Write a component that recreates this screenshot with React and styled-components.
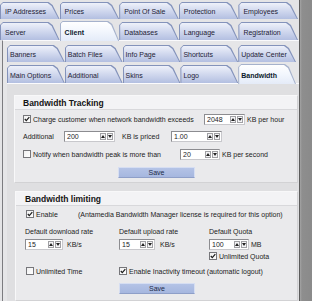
import React from 'react';
import styled, { createGlobalStyle } from 'styled-components';

const Global = createGlobalStyle`
  html, body { margin: 0; padding: 0; background: #e2e2e4; }
  body { font-family: "Liberation Sans", Arial, sans-serif; font-size: 7px; color: #1c1c1c; }
  * { box-sizing: border-box; }
`;

const Window = styled.div`
  width: 312px;
  height: 301px;
  display: flex;
  overflow: hidden;
  background: #e4e4e6;
`;

const Main = styled.div`
  width: 299px;
  display: flex;
  flex-direction: column;
  padding-top: 2px;
  background: #e4e4e6;
`;

const Edge = styled.div`
  flex: 1;
  background: linear-gradient(90deg, #5c5c5c 0, #5c5c5c 1px, #a4a4a4 1px, #8e8e8e 3px, #8a8a8a 100%);
`;

const TabRow = styled.div`
  display: grid;
  grid-template-columns: repeat(5, 1fr);
  width: ${p => p.$w}px;
  margin-left: ${p => p.$x}px;
  margin-top: ${p => p.$gap}px;
  position: relative;
  z-index: 2;
`;

const Tab = styled.div`
  position: relative;
  height: ${p => p.$h + (p.$active ? 2 : 0)}px;
  margin-top: ${p => (p.$active ? -1 : 0)}px;
  margin-bottom: ${p => (p.$active ? -1 : 0)}px;
  display: flex;
  align-items: center;
  padding: 2px 0 0 ${p => p.$pl}px;
  font-weight: ${p => (p.$active ? 700 : 400)};
  color: ${p => (p.$active ? '#0c1a2c' : '#1e2236')};
  background: ${p => (p.$active ? '#a6b2cc' : '#8493bb')};
  clip-path: polygon(0 3px, 3px 0, calc(100% - 11px) 0, calc(100% - 7px) 3px, 100% 100%, 0 100%);
  &::before {
    content: '';
    position: absolute;
    inset: 1px 1px 0 1px;
    clip-path: polygon(0 2px, 2px 0, calc(100% - 11px) 0, calc(100% - 7px) 3px, 100% 100%, 0 100%);
    background: ${p =>
      p.$active
        ? 'linear-gradient(#ffffff, #f2f6fd 50%, #e4ebf8)'
        : 'linear-gradient(#eef1fa 0%, #d3daef 45%, #b3bfe1 100%)'};
  }
  & > span { position: relative; white-space: nowrap; }
`;

const Page = styled.div`
  flex: 1;
  margin-left: 2px;
  border-left: 1px solid #7c7c80;
  border-top: 1px solid #fafafc;
  background: #e6e6e8;
  padding: 4px 0 0 4px;
  display: flex;
  flex-direction: column;
  position: relative;
  z-index: 1;
`;

const InnerPage = styled.div`
  flex: 1;
  border-top: 1px solid #fbfbfd;
  background: #dfdfe1;
  padding-top: 11px;
  display: flex;
  flex-direction: column;
  gap: 8px;
`;

const Group = styled.section`
  margin-left: ${p => p.$ml}px;
  width: ${p => p.$w}px;
  background: #eaeaec;
  border: 1px solid #f8f8f9;
  border-right-color: #d2d2d4;
  border-bottom-color: #d2d2d4;
  display: flex;
  flex-direction: column;
`;

const GroupHeader = styled.div`
  height: ${p => p.$h}px;
  display: flex;
  align-items: center;
  padding-left: ${p => p.$pl}px;
  background: #f3f3f5;
  border-bottom: 1px solid #d8d8db;
  font-weight: 700;
  font-size: 8.5px;
  color: #141414;
`;

const GroupBody = styled.div`
  padding: ${p => p.$pad};
  display: flex;
  flex-direction: column;
`;

const Row = styled.div`
  display: flex;
  align-items: center;
  height: ${p => p.$h || 12}px;
  margin-top: ${p => p.$mt || 0}px;
  margin-left: ${p => p.$ml || 0}px;
`;

const Cols = styled.div`
  display: grid;
  grid-template-columns: 94px 90px 1fr;
  align-items: center;
  height: ${p => p.$h}px;
  margin-top: ${p => p.$mt || 0}px;
`;

const Cell = styled.div`
  display: flex;
  align-items: center;
  grid-column: ${p => p.$col || 'auto'};
  padding-left: ${p => p.$pl || 0}px;
`;

const Text = styled.span`
  display: inline-block;
  white-space: nowrap;
  width: ${p => (p.$w ? `${p.$w}px` : 'auto')};
  margin-left: ${p => p.$ml || 0}px;
`;

const Box = styled.span`
  width: 8px;
  height: 8px;
  flex: none;
  border: 1px solid #76767a;
  background: linear-gradient(135deg, #f0f0f0, #ffffff);
  display: inline-flex;
  align-items: center;
  justify-content: center;
  margin-right: 2px;
`;

const Field = styled.div`
  width: ${p => p.$w}px;
  height: 11px;
  flex: none;
  border: 1px solid #8c8c90;
  border-right-color: #c8c8cc;
  border-bottom-color: #c8c8cc;
  background: #fff;
  display: flex;
  align-items: center;
  padding-left: 2px;
  margin-left: ${p => p.$ml || 0}px;
`;

const FieldText = styled.span`
  flex: 1;
`;

const Spin = styled.div`
  display: flex;
  height: 100%;
  gap: 1px;
  padding: 1px 1px 1px 0;
`;

const SpinBtn = styled.div`
  width: 6px;
  background: #f4f4f6;
  border: 1px solid #a0a0a4;
  display: flex;
  align-items: ${p => (p.$down ? 'flex-end' : 'flex-start')};
  justify-content: center;
  padding: 1px 0;
`;

const SaveButton = styled.div`
  width: ${p => p.$w}px;
  height: 11px;
  margin-left: ${p => p.$ml}px;
  margin-top: ${p => p.$mt}px;
  background: linear-gradient(#b4c3e6, #a6b7df);
  border: 1px solid #d6def2;
  border-bottom-color: #8e9fc8;
  display: flex;
  align-items: center;
  justify-content: center;
  color: #1c2a48;
`;

const Check = ({ checked }) => (
  <Box>
    {checked && (
      <svg width="6" height="6" viewBox="0 0 6 6">
        <path d="M0.8 3 L2.3 4.6 L5.3 1.2" fill="none" stroke="#1a1a1a" strokeWidth="1.2" />
      </svg>
    )}
  </Box>
);

const SpinField = ({ value, w, ml }) => (
  <Field $w={w} $ml={ml}>
    <FieldText>{value}</FieldText>
    <Spin>
      <SpinBtn>
        <svg width="4" height="3" viewBox="0 0 4 3"><polygon points="2,0 4,3 0,3" fill="#222" /></svg>
      </SpinBtn>
      <SpinBtn $down>
        <svg width="4" height="3" viewBox="0 0 4 3"><polygon points="0,0 4,0 2,3" fill="#222" /></svg>
      </SpinBtn>
    </Spin>
  </Field>
);

const TabStrip = ({ items, active, w, x, gap, h, pl }) => (
  <TabRow $w={w} $x={x} $gap={gap}>
    {items.map(t => (
      <Tab key={t} $h={h} $pl={pl} $active={t === active}>
        <span>{t}</span>
      </Tab>
    ))}
  </TabRow>
);

export default function App() {
  return (
    <>
      <Global />
      <Window>
        <Main>
          <TabStrip items={['IP Addresses', 'Prices', 'Point Of Sale', 'Protection', 'Employees']} w={298} x={0} gap={0} h={17} pl={5} />
          <TabStrip items={['Server', 'Client', 'Databases', 'Language', 'Registration']} active="Client" w={298} x={0} gap={3} h={18} pl={5} />
          <Page>
            <TabStrip items={['Banners', 'Batch Files', 'Info Page', 'Shortcuts', 'Update Center']} w={289} x={0} gap={0} h={17} pl={3} />
            <TabStrip items={['Main Options', 'Additional', 'Skins', 'Logo', 'Bandwidth']} active="Bandwidth" w={289} x={0} gap={3} h={18} pl={3} />
            <InnerPage>
              <Group $ml={7} $w={284}>
                <GroupHeader $h={14} $pl={8}>Bandwidth Tracking</GroupHeader>
                <GroupBody $pad="3px 0 4px 8px">
                  <Row>
                    <Check checked />
                    <Text $w={171}>Charge customer when network bandwidth exceeds</Text>
                    <SpinField value="2048" w={41} />
                    <Text $ml={2}>KB per hour</Text>
                  </Row>
                  <Row $mt={5}>
                    <Text $w={41}>Additional</Text>
                    <SpinField value="200" w={51} />
                    <Text $w={49} $ml={7}>KB is priced</Text>
                    <SpinField value="1.00" w={51} />
                  </Row>
                  <Row $mt={6}>
                    <Check />
                    <Text $w={147}>Notify when bandwidth peak is more than</Text>
                    <SpinField value="20" w={40} />
                    <Text $ml={2}>KB per second</Text>
                  </Row>
                  <SaveButton $w={77} $ml={95} $mt={7}>Save</SaveButton>
                </GroupBody>
              </Group>
              <Group $ml={8} $w={283}>
                <GroupHeader $h={14} $pl={9}>Bandwidth limiting</GroupHeader>
                <GroupBody $pad="2px 0 6px 9px">
                  <Row $ml={1}>
                    <Check checked />
                    <Text $w={42}>Enable</Text>
                    <Text>(Antamedia Bandwidth Manager license is required for this option)</Text>
                  </Row>
                  <Cols $h={10} $mt={6}>
                    <Cell>Default download rate</Cell>
                    <Cell>Default upload rate</Cell>
                    <Cell>Default Quota</Cell>
                  </Cols>
                  <Cols $h={11} $mt={3}>
                    <Cell><SpinField value="15" w={38} /><Text $ml={4}>KB/s</Text></Cell>
                    <Cell><SpinField value="15" w={36} /><Text $ml={5}>KB/s</Text></Cell>
                    <Cell><SpinField value="100" w={40} /><Text $ml={2}>MB</Text></Cell>
                  </Cols>
                  <Cols $h={10} $mt={1}>
                    <Cell $col="3"><Check checked /><Text>Unlimited Quota</Text></Cell>
                  </Cols>
                  <Cols $h={12} $mt={4}>
                    <Cell $pl={1}><Check /><Text>Unlimited Time</Text></Cell>
                    <Cell $col="2 / span 2"><Check checked /><Text>Enable Inactivity timeout (automatic logout)</Text></Cell>
                  </Cols>
                  <SaveButton $w={76} $ml={94} $mt={6}>Save</SaveButton>
                </GroupBody>
              </Group>
            </InnerPage>
          </Page>
        </Main>
        <Edge />
      </Window>
    </>
  );
}
